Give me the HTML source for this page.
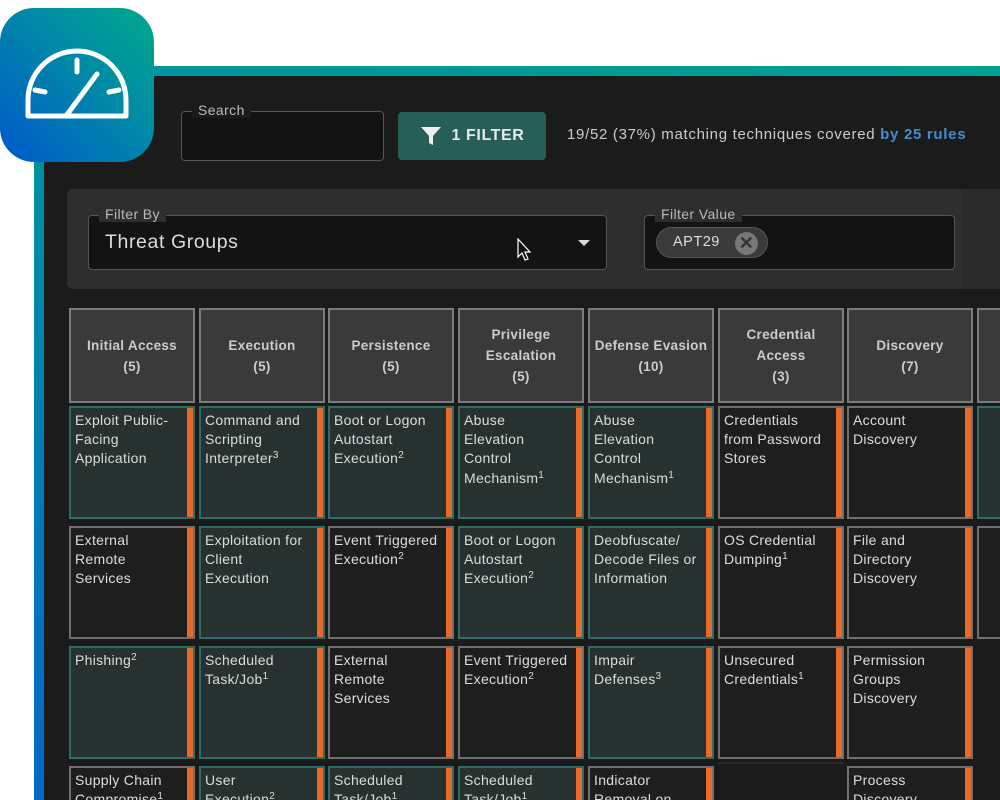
<!DOCTYPE html>
<html><head><meta charset="utf-8"><style>
*{box-sizing:border-box;margin:0;padding:0}
html,body{width:1000px;height:800px;overflow:hidden}
body{background:#fff;font-family:"Liberation Sans",sans-serif;color:#ddd}
#w{position:relative;width:1000px;height:800px;overflow:hidden}
.frame{position:absolute;left:34px;top:66px;width:966px;height:734px;background:linear-gradient(200deg,#00a090 0%,#0090a0 40%,#0068c8 100%)}
.inner{position:absolute;left:44px;top:76px;width:956px;height:724px;background:#1b1b1b;overflow:hidden}
.icon{position:absolute;left:0;top:8px;width:154px;height:154px;border-radius:34px;background:linear-gradient(225deg,#00aa8a 0%,#0088a8 45%,#0058cc 100%);z-index:5}
.abs{position:absolute}
.field{position:absolute;border:1px solid #555;border-radius:4px;background:#131313}
.lbl{position:absolute;top:-10px;left:10px;padding:0 6px;font-size:14px;color:#bbb;letter-spacing:.4px}
.th{position:absolute;top:308px;width:126px;height:95px;background:#3a3a3a;border:2px solid #7c7c7c;font-weight:bold;font-size:13.5px;line-height:21px;color:#ccc;display:flex;align-items:center;justify-content:center;text-align:center;letter-spacing:.3px}
.c{position:absolute;width:126px;height:113px;border:2px solid #6f6f6f;background:#1e1e1e;font-size:14px;line-height:19.2px;letter-spacing:.3px;color:#ddd;padding:3px 0 0 4px;overflow:hidden}
.c.t{border-color:#2f6c68;background:#263130}
.c::after{content:"";position:absolute;right:0;top:0;bottom:0;width:6px;background:#e66b2b}
.c.b{height:34px;border-bottom:none}
sup{font-size:10px;vertical-align:5px;line-height:0}
</style></head><body><div id="w">
<div class="frame"></div>
<div class="inner"></div>
<div class="icon">
<svg width="154" height="154" viewBox="0 0 154 154"><g fill="none" stroke="#fff" stroke-width="5" stroke-linecap="round" stroke-linejoin="round">
<path d="M28 108 V92 A49 49 0 0 1 126 92 V108 Z"/><path d="M77 52 V64"/><path d="M35 82 L45 84"/><path d="M119 82 L109 84"/><path d="M66 108 L97 66"/></g></svg>
</div>
<div class="field" style="left:181px;top:111px;width:203px;height:50px"><span class="lbl" style="background:#1b1b1b">Search</span></div>
<div class="abs" style="left:398px;top:112px;width:148px;height:48px;background:#265e58;border-radius:4px;font-weight:bold;font-size:16px;color:#e8e8e8;letter-spacing:.6px;display:flex;align-items:center;justify-content:center">
<svg width="22" height="22" viewBox="0 0 22 22" style="margin-right:10px"><path d="M1 2 H21 L13 11 V20 L9 18 V11 Z" fill="#eee"/></svg>1 FILTER</div>
<div class="abs" style="left:567px;top:126px;font-size:15px;letter-spacing:.7px;color:#ccc">19/52 (37%) matching techniques covered <b style="color:#3f8fd0">by 25 rules</b></div>
<div class="abs" style="left:67px;top:189px;width:896px;height:100px;background:#2e2e2e;border-radius:6px 0 0 6px"></div>
<div class="abs" style="left:963px;top:189px;width:40px;height:100px;background:#2a2a2a"></div>
<div class="field" style="left:88px;top:215px;width:519px;height:55px"><span class="lbl" style="background:#2e2e2e">Filter By</span>
<div class="abs" style="left:16px;top:15px;font-size:19.5px;color:#ddd;letter-spacing:.6px">Threat Groups</div>
<div class="abs" style="left:489px;top:24px;width:0;height:0;border-left:6px solid transparent;border-right:6px solid transparent;border-top:6px solid #ddd"></div>
<svg class="abs" style="left:428px;top:22px" width="16" height="24" viewBox="0 0 16 24"><path d="M1 1 V19 L5 15 L8 22 L11 21 L8 14 L13 14 Z" fill="#111" stroke="#fff" stroke-width="1.2"/></svg>
</div>
<div class="field" style="left:644px;top:215px;width:311px;height:55px"><span class="lbl" style="background:#2e2e2e">Filter Value</span>
<div class="abs" style="left:11px;top:11px;width:112px;height:31px;border-radius:16px;background:#3a3a3a;border:1px solid #555;font-size:14.5px;color:#ddd;padding:6px 0 0 16px;letter-spacing:.5px">APT29
<div class="abs" style="right:9px;top:4px;width:23px;height:23px;border-radius:50%;background:#777;color:#333;font-size:18px;line-height:23px;text-align:center;font-weight:bold">✕</div></div>
</div>

<div class="th" style="left:69px">Initial Access<br>(5)</div>
<div class="th" style="left:199px">Execution<br>(5)</div>
<div class="th" style="left:328px">Persistence<br>(5)</div>
<div class="th" style="left:458px">Privilege<br>Escalation<br>(5)</div>
<div class="th" style="left:588px">Defense Evasion<br>(10)</div>
<div class="th" style="left:718px">Credential<br>Access<br>(3)</div>
<div class="th" style="left:847px">Discovery<br>(7)</div>
<div class="th" style="left:977px;width:23px;border-right:none"></div>

<div class="c t" style="left:69px;top:406px">Exploit Public-<br>Facing<br>Application</div>
<div class="c t" style="left:199px;top:406px">Command and<br>Scripting<br>Interpreter<sup>3</sup></div>
<div class="c t" style="left:328px;top:406px">Boot or Logon<br>Autostart<br>Execution<sup>2</sup></div>
<div class="c t" style="left:458px;top:406px">Abuse<br>Elevation<br>Control<br>Mechanism<sup>1</sup></div>
<div class="c t" style="left:588px;top:406px">Abuse<br>Elevation<br>Control<br>Mechanism<sup>1</sup></div>
<div class="c" style="left:718px;top:406px">Credentials<br>from Password<br>Stores</div>
<div class="c" style="left:847px;top:406px">Account<br>Discovery</div>
<div class="abs" style="left:977px;top:406px;width:23px;height:113px;border:2px solid #2f6c68;border-right:none;background:#263130"></div>

<div class="c" style="left:69px;top:526px">External<br>Remote<br>Services</div>
<div class="c t" style="left:199px;top:526px">Exploitation for<br>Client<br>Execution</div>
<div class="c" style="left:328px;top:526px">Event Triggered<br>Execution<sup>2</sup></div>
<div class="c t" style="left:458px;top:526px">Boot or Logon<br>Autostart<br>Execution<sup>2</sup></div>
<div class="c t" style="left:588px;top:526px">Deobfuscate/<br>Decode Files or<br>Information</div>
<div class="c" style="left:718px;top:526px">OS Credential<br>Dumping<sup>1</sup></div>
<div class="c" style="left:847px;top:526px">File and<br>Directory<br>Discovery</div>
<div class="abs" style="left:977px;top:526px;width:23px;height:113px;border:2px solid #6f6f6f;border-right:none;background:#1e1e1e"></div>

<div class="c t" style="left:69px;top:646px">Phishing<sup>2</sup></div>
<div class="c t" style="left:199px;top:646px">Scheduled<br>Task/Job<sup>1</sup></div>
<div class="c" style="left:328px;top:646px">External<br>Remote<br>Services</div>
<div class="c" style="left:458px;top:646px">Event Triggered<br>Execution<sup>2</sup></div>
<div class="c t" style="left:588px;top:646px">Impair<br>Defenses<sup>3</sup></div>
<div class="c" style="left:718px;top:646px">Unsecured<br>Credentials<sup>1</sup></div>
<div class="c" style="left:847px;top:646px">Permission<br>Groups<br>Discovery</div>

<div class="c b" style="left:69px;top:766px">Supply Chain<br>Compromise<sup>1</sup></div>
<div class="c t b" style="left:199px;top:766px">User<br>Execution<sup>2</sup></div>
<div class="c t b" style="left:328px;top:766px">Scheduled<br>Task/Job<sup>1</sup></div>
<div class="c t b" style="left:458px;top:766px">Scheduled<br>Task/Job<sup>1</sup></div>
<div class="c b" style="left:588px;top:766px">Indicator<br>Removal on</div>
<div class="abs" style="left:718px;top:762px;width:126px;height:2px;background:#2a2a2a"></div>
<div class="c b" style="left:847px;top:766px">Process<br>Discovery</div>
</div></body></html>
